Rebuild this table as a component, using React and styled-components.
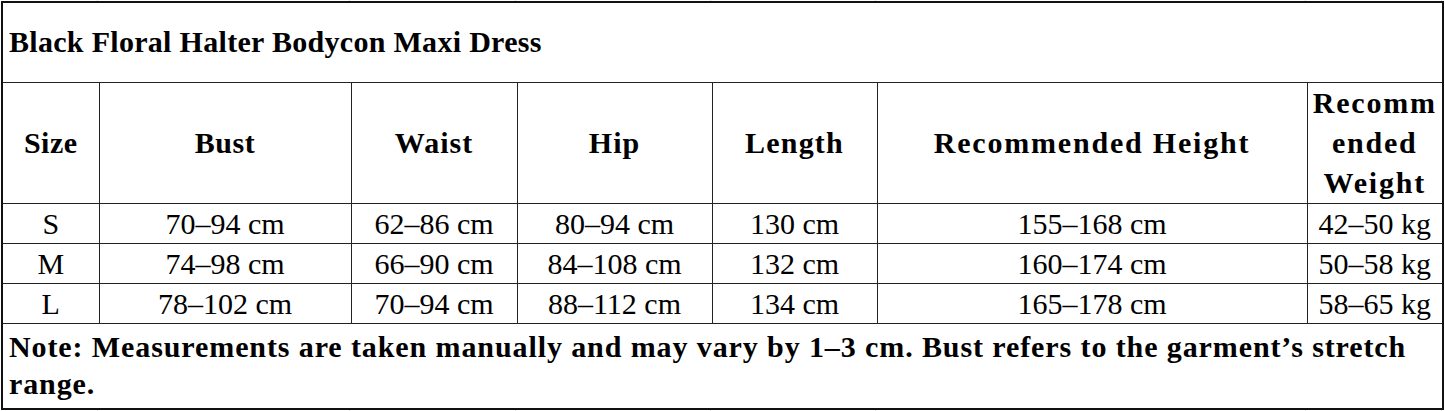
import React from 'react';
import styled, { createGlobalStyle } from 'styled-components';

const GlobalStyle = createGlobalStyle`
  html, body {
    margin: 0;
    padding: 0;
    background: #ffffff;
  }
  body {
    font-family: "Liberation Serif", "Times New Roman", serif;
    color: #000;
  }
`;

const columns = [97, 252, 166, 195, 165, 430, 136];

const rows = [
  ['S', '70–94 cm', '62–86 cm', '80–94 cm', '130 cm', '155–168 cm', '42–50 kg'],
  ['M', '74–98 cm', '66–90 cm', '84–108 cm', '132 cm', '160–174 cm', '50–58 kg'],
  ['L', '78–102 cm', '70–94 cm', '88–112 cm', '134 cm', '165–178 cm', '58–65 kg'],
];

const SizeChart = () => {
  return (
    <Page>
      <GlobalStyle />
      <EdgeStrip>
        {columns.map((w, i) => (
          <EdgeTick key={i} style={{ width: w }} />
        ))}
      </EdgeStrip>
      <ChartTable>
        <colgroup>
          {columns.map((w, i) => (
            <col key={i} style={{ width: w }} />
          ))}
        </colgroup>
        <tbody>
          <TitleRow>
            <TitleCell colSpan={7}>Black Floral Halter Bodycon Maxi Dress</TitleCell>
          </TitleRow>
          <HeaderRow>
            <HeadCell>Size</HeadCell>
            <HeadCell>Bust</HeadCell>
            <HeadCell spacing={1}>Waist</HeadCell>
            <HeadCell spacing={1}>Hip</HeadCell>
            <HeadCell spacing={1.2}>Length</HeadCell>
            <HeadCell spacing={1.8}>Recommended Height</HeadCell>
            <HeadCell spacing={1.8}>Recomm<wbr />ended Weight</HeadCell>
          </HeaderRow>
          {rows.map((row) => (
            <DataRow key={row[0]}>
              {row.map((value, i) => (
                <DataCell key={i}>{value}</DataCell>
              ))}
            </DataRow>
          ))}
          <NoteRow>
            <NoteCell colSpan={7}>
              Note: Measurements are taken manually and may vary by 1–3 cm. Bust refers to the garment’s stretch range.
            </NoteCell>
          </NoteRow>
        </tbody>
      </ChartTable>
      <EdgeStrip>
        {columns.map((w, i) => (
          <EdgeTick key={i} style={{ width: w }} />
        ))}
      </EdgeStrip>
    </Page>
  );
};

export default function App() {
  return <SizeChart />;
}

const Page = styled.div`
  width: 1445px;
  height: 411px;
  overflow: hidden;
  padding-left: 1px;
  box-sizing: border-box;
`;

const EdgeStrip = styled.div`
  display: flex;
  height: 1px;
`;

const EdgeTick = styled.div`
  box-sizing: border-box;
  height: 100%;
  border-right: 1px solid #dedede;
`;

const ChartTable = styled.table`
  width: 1441px;
  table-layout: fixed;
  border-collapse: collapse;
  border: 2px solid #111;
`;

const cellBorder = `1px solid #222`;

const TitleRow = styled.tr`
  height: 80px;
`;

const TitleCell = styled.td`
  border: ${cellBorder};
  padding: 0 0 0 6px;
  font-weight: bold;
  font-size: 30px;
  letter-spacing: 0.3px;
  text-align: left;
  vertical-align: middle;
`;

const HeaderRow = styled.tr`
  height: 120px;
`;

const HeadCell = styled.td`
  border: ${cellBorder};
  padding: 0 2px;
  font-weight: bold;
  font-size: 30px;
  line-height: 40px;
  letter-spacing: ${(p) => p.spacing || 0.5}px;
  text-align: center;
  vertical-align: middle;
`;

const DataRow = styled.tr`
  height: 40px;
`;

const DataCell = styled.td`
  border: ${cellBorder};
  padding: 0;
  font-size: 30px;
  line-height: 39px;
  text-align: center;
  vertical-align: middle;
  white-space: nowrap;
`;

const NoteRow = styled.tr`
  height: 86px;
`;

const NoteCell = styled.td`
  border: ${cellBorder};
  padding: 4px 20px 0 6px;
  font-weight: bold;
  font-size: 30px;
  line-height: 37px;
  letter-spacing: 0.9px;
  text-align: left;
  vertical-align: top;
`;
